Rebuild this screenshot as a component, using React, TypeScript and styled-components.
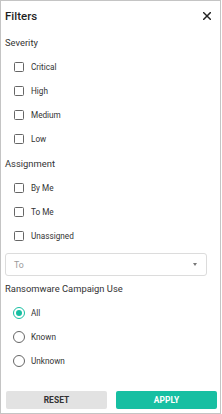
import React from "react";
import styled, { createGlobalStyle } from "styled-components";

const GlobalStyle = createGlobalStyle`
  html, body { margin: 0; padding: 0; background: #ffffff; }
  body { font-family: Roboto, "Noto Sans", "Liberation Sans", sans-serif; }
  * { box-sizing: border-box; }
`;

const Panel = styled.div`
  width: 221px;
  height: 414px;
  border: 1px solid #c4c4c4;
  background: #fff;
  display: flex;
  flex-direction: column;
  padding: 0 3px 4px 4px;
`;

const Header = styled.div`
  height: 29px;
  display: flex;
  align-items: center;
  justify-content: space-between;
`;

const Title = styled.div`
  font-size: 11.5px;
  font-weight: 500;
  color: #1f1f1f;
`;

const CloseButton = styled.button`
  border: 0;
  background: none;
  padding: 0;
  margin-right: 5px;
  width: 10px;
  height: 10px;
  display: flex;
  align-items: center;
  justify-content: center;
  cursor: pointer;
`;

const SectionTitle = styled.div`
  height: 25px;
  display: flex;
  align-items: center;
  font-size: 9.4px;
  color: #333;
`;

const OptionRow = styled.label`
  height: 24px;
  display: flex;
  align-items: center;
  padding-left: ${(p: { $indent: number }) => p.$indent}px;
  font-size: 8.2px;
  color: #333;
  cursor: pointer;
`;

const CheckBox = styled.span`
  width: 10px;
  height: 10px;
  border: 1.4px solid #666;
  border-radius: 1.5px;
  margin-right: 7px;
  flex: none;
`;

const Radio = styled.span<{ $checked: boolean }>`
  width: 12px;
  height: 12px;
  border-radius: 50%;
  border: 1.4px solid ${(p) => (p.$checked ? "#17bfa2" : "#666")};
  margin-right: 6px;
  flex: none;
  display: flex;
  align-items: center;
  justify-content: center;
  &::after {
    content: "";
    width: 6px;
    height: 6px;
    border-radius: 50%;
    background: ${(p) => (p.$checked ? "#17bfa2" : "transparent")};
  }
`;

const Select = styled.div`
  margin-top: 5px;
  width: 202px;
  height: 23px;
  border: 1px solid #dcdcdc;
  border-radius: 3px;
  display: flex;
  align-items: center;
  justify-content: space-between;
  padding: 0 9px 0 8px;
  font-size: 8.8px;
  color: #9a9a9a;
`;

const Caret = styled.span`
  width: 0;
  height: 0;
  border-left: 2.5px solid transparent;
  border-right: 2.5px solid transparent;
  border-top: 3px solid #777;
`;

const Footer = styled.div`
  margin-top: auto;
  display: flex;
  gap: 9px;
  padding-left: 1px;
`;

const Button = styled.button<{ $primary?: boolean }>`
  flex: 1;
  height: 18px;
  border: 0;
  border-radius: 2px;
  font-family: Roboto, "Liberation Sans", sans-serif;
  font-size: 8.4px;
  font-weight: 700;
  letter-spacing: 0.1px;
  background: ${(p) => (p.$primary ? "#17bfa2" : "#e2e2e2")};
  color: ${(p) => (p.$primary ? "#fff" : "#333")};
  cursor: pointer;
`;

const severity = ["Critical", "High", "Medium", "Low"];
const assignment = ["By Me", "To Me", "Unassigned"];
const ransomware = ["All", "Known", "Unknown"];

export default function App() {
  return (
    <>
      <GlobalStyle />
      <Panel>
        <Header>
          <Title>Filters</Title>
          <CloseButton aria-label="Close">
            <svg width="8" height="8" viewBox="0 0 8 8">
              <path d="M0.7 0.7 L7.3 7.3 M7.3 0.7 L0.7 7.3" stroke="#222" strokeWidth="1.5" strokeLinecap="square" />
            </svg>
          </CloseButton>
        </Header>
        <SectionTitle>Severity</SectionTitle>
        {severity.map((s) => (
          <OptionRow key={s} $indent={9}>
            <CheckBox />
            {s}
          </OptionRow>
        ))}
        <SectionTitle>Assignment</SectionTitle>
        {assignment.map((s) => (
          <OptionRow key={s} $indent={9}>
            <CheckBox />
            {s}
          </OptionRow>
        ))}
        <Select>
          <span>To</span>
          <Caret />
        </Select>
        <SectionTitle>Ransomware Campaign Use</SectionTitle>
        {ransomware.map((s, i) => (
          <OptionRow key={s} $indent={8}>
            <Radio $checked={i === 0} />
            {s}
          </OptionRow>
        ))}
        <Footer>
          <Button>RESET</Button>
          <Button $primary>APPLY</Button>
        </Footer>
      </Panel>
    </>
  );
}
